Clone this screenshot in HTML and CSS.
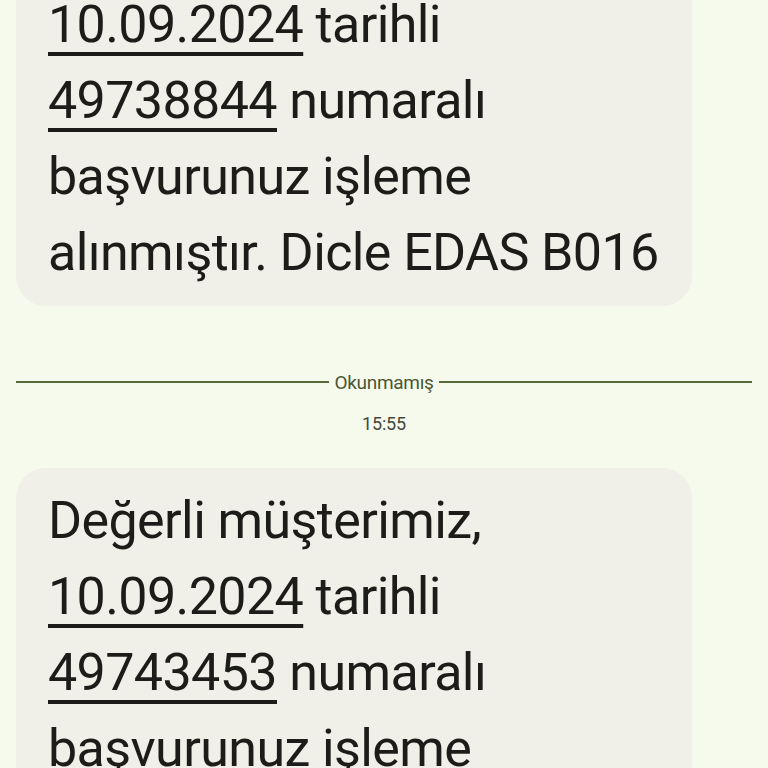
FILE: index.html
```
<!DOCTYPE html>
<html lang="tr">
<head>
<meta charset="utf-8">
<link rel="stylesheet" href="styles.css">
</head>
<body>
<div class="thread">
  <div class="bubble">
    <p class="msg">Değerli müşterimiz, <a class="link">10.09.2024</a> tarihli <a class="link">49738844</a> numaralı başvurunuz işleme alınmıştır. Dicle EDAS B016</p>
  </div>
  <div class="divider">
    <span class="rule"></span>
    <span class="divider-label">Okunmamış</span>
    <span class="rule"></span>
  </div>
  <div class="time">15:55</div>
  <div class="bubble">
    <p class="msg">Değerli müşterimiz, <a class="link">10.09.2024</a> tarihli <a class="link">49743453</a> numaralı başvurunuz işleme alınmıştır. Dicle EDAS B016</p>
  </div>
</div>
</body>
</html>
```
FILE: styles.css
```
html, body {
  margin: 0;
  padding: 0;
  background: #f6faec;
  overflow: hidden;
  height: 768px;
}
.thread {
  margin-top: -104px;
  padding: 0 16px;
  display: flex;
  flex-direction: column;
}
.bubble {
  background: #f0efe8;
  border-radius: 30px;
  width: 676px;
  box-sizing: border-box;
  padding: 15px 20px 15px 32px;
}
.msg {
  margin: 0;
  font-family: Roboto, "Noto Sans", sans-serif;
  font-size: 52px;
  letter-spacing: -0.6px;
  line-height: 76px;
  color: #1c1c19;
}
.link {
  color: inherit;
  text-decoration: underline;
  text-decoration-thickness: 4px;
  text-underline-offset: 10px;
}
.divider {
  margin-top: 64px;
  height: 24px;
  display: flex;
  align-items: center;
  gap: 5px;
}
.rule {
  flex: 1;
  height: 2px;
  background: #5a693a;
}
.divider-label {
  font-family: Roboto, sans-serif;
  font-size: 19px;
  letter-spacing: -0.3px;
  color: #4b5633;
}
.time {
  margin-top: 20px;
  height: 20px;
  line-height: 20px;
  text-align: center;
  font-family: Roboto, sans-serif;
  font-size: 18px;
  letter-spacing: -0.2px;
  color: #45483c;
}
.time + .bubble {
  margin-top: 34px;
}
```
